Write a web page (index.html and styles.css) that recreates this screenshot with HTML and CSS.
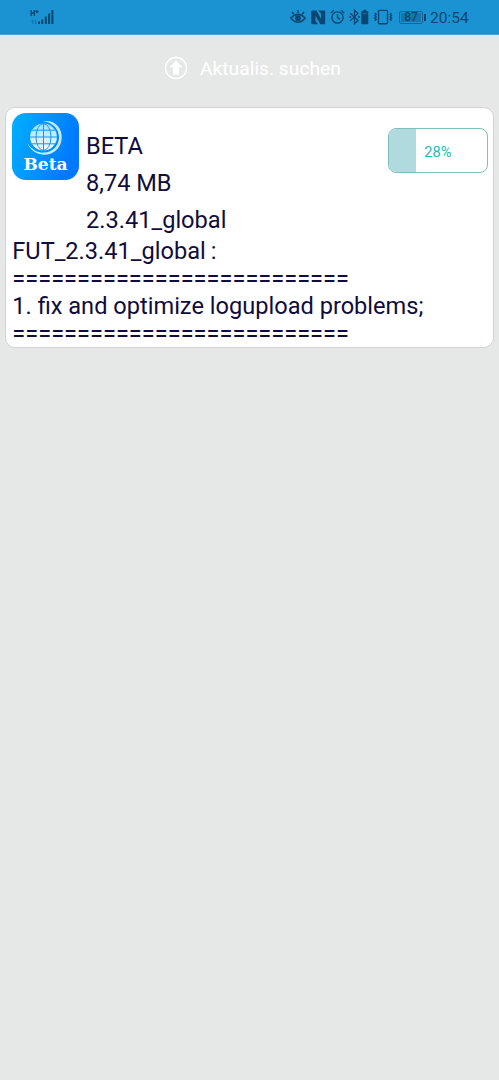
FILE: index.html
```html
<!DOCTYPE html>
<html lang="de">
<head>
<meta charset="utf-8">
<title>Beta</title>
<link rel="stylesheet" href="styles.css">
</head>
<body>
<header class="status">
  <svg class="signal" width="26" height="18" viewBox="0 0 26 18">
    <path d="M1.2 1v6M4.3 1v6M1.2 4h3.100M5.300 2.700h3.200M6.900 1.100v3.200" stroke="#0a4671" stroke-width="1.3" fill="none"/>
    <path d="M2.8 15v-4M1.4 12.2L2.8 11M5.5 11v4M6.8 13.8L5.5 15" stroke="#0f70ab" stroke-width="1" fill="none"/>
    <path d="M8 12.500h2V15H8zM11.300 10.500h2V15h-2zM14.800 7.500h2V15h-2zM18.100 4.500h2V15h-2zM21.400 1h2V15h-2z" fill="#0a4671"/>
  </svg>
  <div class="tray">
    <svg class="eye" width="17" height="16" viewBox="0 0 17 16" fill="none" stroke="#0a4671" stroke-width="1.5">
      <path d="M.8 9Q8 1.500 15.200 9Q8 17.500 .8 9ZM8 4V1M3.900 5.200L1.900 3M12.100 5.200L14.100 3"/>
      <circle cx="8" cy="9.300" r="2.2" fill="#0a4671"/>
    </svg>
    <svg class="nfc" width="15" height="15" viewBox="0 0 15 15">
      <path d="M1.300 .5H5.500L10.100 9V3.700L7.300 .5H13.200Q14.200 .5 14.200 1.500V13.200Q14.200 14.200 13.200 14.200H9.300L4.500 5.700V11L7.300 14.200H1.300Q.3 14.200 .3 13.200V1.500Q.3 .5 1.300 .5Z" fill="#0a4671"/>
    </svg>
    <svg class="alarm" width="15" height="16" viewBox="0 0 15 16" fill="none" stroke="#0a4671" stroke-width="1.4">
      <circle cx="7.5" cy="8.5" r="5.6"/><path d="M7.5 5v3.7l2.6 1.6M.8 4L4 1.3M14.2 4L11 1.3"/>
    </svg>
    <svg class="bluetooth" width="20" height="16" viewBox="0 0 20 16">
      <path d="M.2 4.200L8 11.400L4.500 14.800V1.200L8 4.600L.2 11.800M-.8 8H1.200M8 8h1.900" fill="none" stroke="#0a4671" stroke-width="1.3"/>
      <path d="M11.300 2.300h2V.8h3v1.500h2V15.200h-7z" fill="#0a4671"/><path d="M12.600 3.800h4.400v1.500h-4.400z" fill="#176497"/>
    </svg>
    <svg class="vibrate" width="19" height="16" viewBox="0 0 19 16" fill="none" stroke="#0a4671" stroke-width="1.4">
      <rect x="4.500" y="1.400" width="9" height="13.400" rx="1"/>
      <path d="M.8 4l1.300 1.300-1.300 1.300 1.300 1.300-1.300 1.300 1.300 1.300-1.300 1.300M17.500 4l-1.300 1.300 1.300 1.300-1.300 1.300 1.300 1.300-1.300 1.300 1.300 1.300"/>
    </svg>
    <div class="battery"><span class="level">87</span></div>
    <span class="tip"></span>
    <span class="clock">20:54</span>
  </div>
</header>
<div class="check">
  <svg width="24" height="24" viewBox="0 0 24 24">
    <circle cx="12" cy="12" r="10.500" fill="none" stroke="#fff" stroke-width="1.4"/>
    <path d="M12 4.300L18.300 11.300H15V18.800H9V11.300H5.700Z" fill="#fff"/>
  </svg>
  <span class="check-label">Aktualis. suchen</span>
</div>
<main class="card">
  <div class="app">
    <svg class="app-icon" width="67" height="67" viewBox="0 0 67 67">
      <defs>
        <linearGradient id="bg" x1="0" y1="0" x2="1" y2=".3"><stop offset="0" stop-color="#00b0ff"/><stop offset="1" stop-color="#0079ff"/></linearGradient>
        <linearGradient id="globe" x1="0" y1="0" x2="0" y2="1"><stop offset="0" stop-color="#a0e0ff"/><stop offset="1" stop-color="#f4fcff"/></linearGradient>
      </defs>
      <rect width="67" height="67" rx="14" fill="url(#bg)"/>
      <circle cx="31.5" cy="24" r="13.4" fill="url(#globe)"/>
      <g fill="none" stroke="#1696f5" stroke-width="1">
        <path d="M31.5 10v28M18 24h27M20 17.2h23M20 30.8h23"/>
        <ellipse cx="31.5" cy="24" rx="7.5" ry="13.4"/>
      </g>
      <path d="M31 8.2C43 6.500 50 15 49.700 24.500C49.500 36 40 43 30 41.600C23 40.600 17.500 36 15.500 30C20 37.500 26.500 40 32 39.600C40.500 39 46.800 33 47 24.500C47.200 15.500 40 9 31 8.200Z" fill="#c4ecff"/>
      <text class="app-name" x="33.500" y="57" text-anchor="middle" textLength="44" lengthAdjust="spacingAndGlyphs">Beta</text>
    </svg>
    <div class="facts">
      <div>BETA</div>
      <div>8,74 MB</div>
      <div>2.3.41_global</div>
    </div>
    <div class="progress"><div class="bar" style="width:28%"></div><span class="percent">28%</span></div>
  </div>
  <div class="notes">
    <div>FUT_2.3.41_global<span class="colon">:</span></div>
    <div>==========================</div>
    <div>1. fix and optimize logupload problems;</div>
    <div>==========================</div>
  </div>
</main>
</body>
</html>
```
FILE: styles.css
```css
* { box-sizing: border-box; }
body { margin: 0; min-height: 1080px; background: #e6e8e7; font-family: Roboto, sans-serif; color: #100c3c; }
svg { display: block; flex: none; }
.status { height: 35px; background: #1b93d3; border-bottom: 1px solid #4a9fcc; display: flex; justify-content: space-between; padding: 0 30px; color: #0a4671; }
.signal { margin-top: 9px; }
.tray { display: flex; align-items: center; height: 34px; }
.nfc { margin-left: 4px; }
.alarm { margin-left: 4px; }
.bluetooth { margin-left: 5px; overflow: visible; }
.vibrate { margin-left: 4px; }
.battery { margin-left: 6px; width: 24px; height: 13px; border: 1px solid #126398; border-radius: 2px; padding: 1px; display: flex; }
.level { flex: none; width: 20px; height: 9px; background: #1676af; font-size: 12px; line-height: 9px; font-weight: 500; text-align: center; }
.tip { width: 2px; height: 7px; margin-left: 1px; background: #0a4671; }
.clock { font-size: 15.500px; margin: 1px 0 0 4px; width: 39px; white-space: nowrap; }
.check { height: 72px; display: flex; align-items: center; padding: 0 0 6px 164px; color: #fff; }
.check-label { font-size: 19.250px; margin: 1px 0 0 12px; white-space: nowrap; }
.card { margin: 0 5px; width: 489px; height: 241px; background: #fff; border: 1px solid #d0d4d3; border-radius: 10px; padding: 5px 5px 0 6px; }
.app { display: flex; }
.app-name { font: bold 16.500px "DejaVu Serif", serif; fill: #fff; }
.facts { flex: 1; margin: 15px 0 0 7px; font-size: 23.600px; line-height: 37px; }
.progress { position: relative; width: 100px; height: 45px; margin-top: 15px; border: 1px solid #80bfbb; border-radius: 8px; overflow: hidden; }
.bar { height: 100%; background: #afdbdf; }
.percent { position: absolute; inset: 0; display: flex; align-items: center; justify-content: center; padding-top: 2px; font-size: 14.700px; color: #2fb5b7; }
.notes { margin: -1px 0 0 .3px; font-size: 23.600px; line-height: 27.700px; white-space: nowrap; }
.colon { margin-left: 5px; }
```
